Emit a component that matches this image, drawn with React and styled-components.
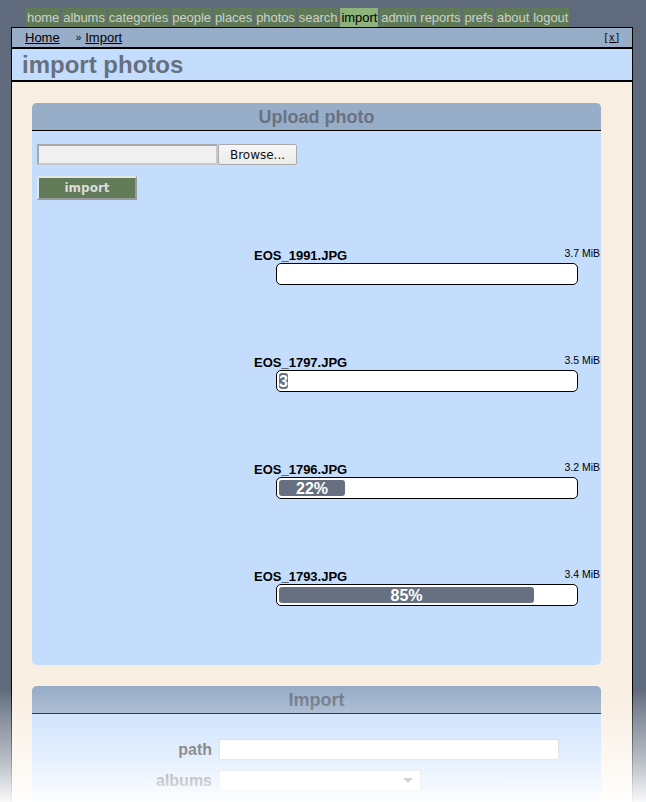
import React from "react";
import styled, { createGlobalStyle } from "styled-components";

const GlobalStyle = createGlobalStyle`
  html, body { margin: 0; padding: 0; }
  body {
    background: #5f6a7c;
    font-family: "Liberation Sans", Arial, sans-serif;
    overflow: hidden;
  }
`;

const Page = styled.div`
  padding-top: 8px;
`;

const Menu = styled.nav`
  display: flex;
  gap: 2px;
  padding-left: 26px;
  height: 19px;
`;

const MenuItem = styled.a`
  display: block;
  padding: 0 1px;
  line-height: 19px;
  font-size: 13px;
  letter-spacing: -0.06px;
  color: ${(p) => (p.$active ? "#000" : "#cdd0cc")};
  background: ${(p) => (p.$active ? "#8db27a" : "#5f7a57")};
  text-decoration: none;
`;

const Frame = styled.div`
  margin-left: 11px;
  width: 620px;
  border: 1px solid #000;
  border-bottom: none;
`;

const Crumbs = styled.div`
  display: flex;
  align-items: center;
  height: 19px;
  padding: 0 11px 0 13px;
  background: #98adc7;
  border-bottom: 2px solid #000;
  font-size: 13px;
`;

const CrumbLink = styled.a`
  color: #000;
  text-decoration: underline;
`;

const CrumbSep = styled.span`
  font-size: 10px;
  margin: 0 4px 0 16px;
`;

const Close = styled.span`
  margin-left: auto;
  font-size: 10px;
  letter-spacing: 2px;
  & u { text-decoration: underline; }
`;

const TitleBar = styled.h1`
  margin: 0;
  height: 31px;
  padding-left: 10px;
  background: #c5ddfd;
  border-bottom: 2px solid #000;
  font-size: 24px;
  font-weight: bold;
  line-height: 31px;
  color: #667080;
`;

const Content = styled.div`
  background: #f9eee2;
  padding: 21px 31px 40px 20px;
  display: flex;
  flex-direction: column;
  gap: 21px;
`;

const Panel = styled.section`
  border-radius: 5px;
  overflow: hidden;
  background: #c5ddfd;
`;

const PanelHeader = styled.h2`
  margin: 0;
  height: 27px;
  background: #98adc7;
  border-bottom: 1px solid #000;
  text-align: center;
  font-size: 18px;
  font-weight: bold;
  line-height: 28px;
  color: #687283;
`;

const UploadBody = styled.div`
  padding: 13px 5px 59px 5px;
`;

const FileRow = styled.div`
  display: flex;
  height: 21px;
`;

const FileField = styled.div`
  width: 177px;
  height: 17px;
  background: #f0f0f0;
  border: 2px solid #c8c8c8;
  border-top-color: #a8a8a8;
  border-left-color: #a8a8a8;
`;

const BrowseButton = styled.button`
  width: 79px;
  height: 21px;
  padding: 0;
  background: linear-gradient(#f6f6f6, #ececec);
  border: 1px solid #a9a9a9;
  border-radius: 2px;
  font-family: "DejaVu Sans", sans-serif;
  font-size: 12px;
  color: #111;
`;

const ImportButton = styled.button`
  display: block;
  margin-top: 11px;
  width: 100px;
  height: 24px;
  padding: 0;
  background: #617a58;
  border: 2px solid;
  border-color: #e6e6e6 #9a9a9a #9a9a9a #e6e6e6;
  font-family: "DejaVu Sans", sans-serif;
  font-weight: bold;
  font-size: 12px;
  line-height: 20px;
  color: #dcdcdc;
`;

const Entries = styled.div`
  margin: 47px 0 0 217px;
  width: 346px;
  display: flex;
  flex-direction: column;
  gap: 69px;
`;

const Entry = styled.div``;

const EntryHead = styled.div`
  display: flex;
  justify-content: space-between;
  align-items: flex-start;
  height: 16px;
`;

const FileName = styled.span`
  font-weight: bold;
  font-size: 13px;
  line-height: 17px;
  color: #000;
`;

const FileSize = styled.span`
  font-size: 10.5px;
  line-height: 13px;
  color: #000;
`;

const Bar = styled.div`
  margin-left: 22px;
  box-sizing: border-box;
  width: 302px;
  height: 22px;
  padding: 2px;
  border: 1px solid #000;
  border-radius: 5px;
  background: #fff;
`;

const Fill = styled.div`
  max-width: 100%;
  height: 16px;
  border-radius: 3px;
  background: #667080;
  color: #fff;
  font-weight: bold;
  font-size: 16px;
  line-height: 17px;
  text-align: center;
  white-space: nowrap;
  overflow: hidden;
`;

const FormBody = styled.div`
  padding: 25px 0 60px 0;
  display: grid;
  grid-template-columns: 180px 1fr;
  column-gap: 7px;
  row-gap: 10px;
  align-items: center;
`;

const Label = styled.label`
  text-align: right;
  font-size: 16px;
  font-weight: bold;
  color: #1e1e1e;
`;

const TextInput = styled.div`
  width: 338px;
  height: 19px;
  background: #fff;
  border: 1px solid #c9c9c9;
  border-radius: 2px;
`;

const Select = styled.div`
  position: relative;
  width: 200px;
  height: 19px;
  background: #fff;
  border: 1px solid #c9c9c9;
  border-radius: 2px;
  &::after {
    content: "";
    position: absolute;
    right: 7px;
    top: 7px;
    border-left: 5px solid transparent;
    border-right: 5px solid transparent;
    border-top: 5px solid #555;
  }
`;

const Fade = styled.div`
  position: fixed;
  left: 0;
  right: 0;
  bottom: 0;
  height: 114px;
  pointer-events: none;
  background: linear-gradient(
    rgba(255, 255, 255, 0),
    rgba(255, 255, 255, 0.22) 22%,
    rgba(255, 255, 255, 0.55) 62%,
    rgba(255, 255, 255, 0.96)
  );
`;

const menu = [
  "home", "albums", "categories", "people", "places", "photos", "search",
  "import", "admin", "reports", "prefs", "about", "logout",
];

const files = [
  { name: "EOS_1991.JPG", size: "3.7 MiB", pct: null },
  { name: "EOS_1797.JPG", size: "3.5 MiB", pct: 3 },
  { name: "EOS_1796.JPG", size: "3.2 MiB", pct: 22 },
  { name: "EOS_1793.JPG", size: "3.4 MiB", pct: 85 },
];

export default function App() {
  return (
    <>
      <GlobalStyle />
      <Page>
        <Menu>
          {menu.map((m) => (
            <MenuItem key={m} href="#" $active={m === "import"}>{m}</MenuItem>
          ))}
        </Menu>
        <Frame>
          <Crumbs>
            <CrumbLink href="#">Home</CrumbLink>
            <CrumbSep>»</CrumbSep>
            <CrumbLink href="#">Import</CrumbLink>
            <Close>[<u>x</u>]</Close>
          </Crumbs>
          <TitleBar>import photos</TitleBar>
          <Content>
            <Panel>
              <PanelHeader>Upload photo</PanelHeader>
              <UploadBody>
                <FileRow>
                  <FileField />
                  <BrowseButton>Browse...</BrowseButton>
                </FileRow>
                <ImportButton>import</ImportButton>
                <Entries>
                  {files.map((f) => (
                    <Entry key={f.name}>
                      <EntryHead>
                        <FileName>{f.name}</FileName>
                        <FileSize>{f.size}</FileSize>
                      </EntryHead>
                      <Bar>
                        {f.pct !== null && (
                          <Fill style={{ width: `${f.pct * 3}px` }}>{f.pct}%</Fill>
                        )}
                      </Bar>
                    </Entry>
                  ))}
                </Entries>
              </UploadBody>
            </Panel>
            <Panel>
              <PanelHeader>Import</PanelHeader>
              <FormBody>
                <Label>path</Label>
                <TextInput />
                <Label>albums</Label>
                <Select />
                <Label />
                <TextInput />
              </FormBody>
            </Panel>
          </Content>
        </Frame>
      </Page>
      <Fade />
    </>
  );
}
